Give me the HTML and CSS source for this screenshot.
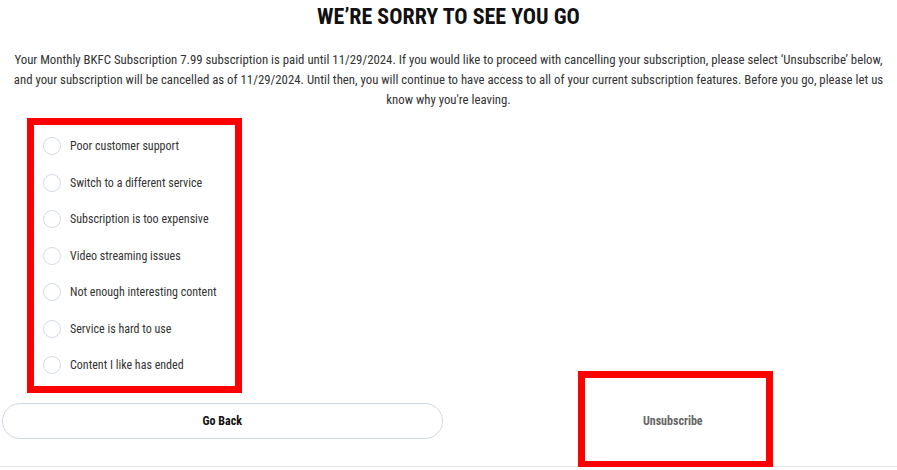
FILE: index.html
```html
<!DOCTYPE html>
<html lang="en">
<head>
<meta charset="utf-8">
<title>Cancel subscription</title>
<link rel="stylesheet" href="styles.css">
</head>
<body>
<main class="page">
  <h1 class="title">WE’RE SORRY TO SEE YOU GO</h1>
  <p class="intro">Your Monthly BKFC Subscription 7.99 subscription is paid until 11/29/2024. If you would like to proceed with cancelling your subscription, please select ‘Unsubscribe’ below, and your subscription will be cancelled as of 11/29/2024. Until then, you will continue to have access to all of your current subscription features. Before you go, please let us know why you're leaving.</p>
  <ul class="reasons">
    <li class="reason"><span class="radio"></span><span class="label">Poor customer support</span></li>
    <li class="reason"><span class="radio"></span><span class="label">Switch to a different service</span></li>
    <li class="reason"><span class="radio"></span><span class="label">Subscription is too expensive</span></li>
    <li class="reason"><span class="radio"></span><span class="label">Video streaming issues</span></li>
    <li class="reason"><span class="radio"></span><span class="label">Not enough interesting content</span></li>
    <li class="reason"><span class="radio"></span><span class="label">Service is hard to use</span></li>
    <li class="reason"><span class="radio"></span><span class="label">Content I like has ended</span></li>
  </ul>
  <div class="actions">
    <div class="col col-left"><button class="btn btn-back">Go Back</button></div>
    <div class="col col-right"><button class="btn btn-unsub">Unsubscribe</button><span class="highlight"></span></div>
  </div>
</main>
</body>
</html>
```
FILE: styles.css
```css
* { box-sizing: border-box; }
html, body { margin: 0; padding: 0; background: #fff; }
body {
  font-family: "Roboto Condensed", Roboto, "Liberation Sans", sans-serif;
  color: #333;
}
.page { display: flex; flex-direction: column; }
.title {
  margin: 5px 0 0;
  text-align: center;
  font-size: 22px;
  line-height: 24px;
  font-weight: 700;
  color: #111;
}
.intro {
  margin: 21px 0 0;
  padding: 0 10px;
  text-align: center;
  font-size: 12.8px;
  line-height: 20px;
  color: #333;
}
.reasons {
  list-style: none;
  margin: 8px 0 0 27px;
  padding: 3px 0 2px 9px;
  width: 215px;
  border: 7px solid #ff0000;
}
.reason {
  display: flex;
  align-items: center;
  gap: 9px;
  height: 36.5px;
  font-size: 12px;
  color: #333;
}
.radio {
  width: 18px;
  height: 18px;
  border: 1px solid #d3dbe6;
  border-radius: 50%;
  flex: none;
}
.actions {
  display: grid;
  grid-template-columns: 1fr 1fr;
  margin-top: 10px;
  padding-bottom: 27px;
  border-bottom: 1px solid #e3e8ef;
}
.col { position: relative; }
.col-left { padding: 0 6px 0 2px; }
.btn {
  display: block;
  width: 100%;
  height: 36px;
  font-family: inherit;
  font-size: 12px;
  font-weight: 700;
  background: #fff;
  cursor: pointer;
}
.btn-back {
  border: 1px solid #cfd8e6;
  border-radius: 18px;
  color: #111;
}
.btn-unsub {
  border: none;
  color: #666;
}
.highlight {
  position: absolute;
  left: 129px;
  top: -32px;
  width: 195px;
  height: 97px;
  border: 7px solid #ff0000;
  pointer-events: none;
}
```
